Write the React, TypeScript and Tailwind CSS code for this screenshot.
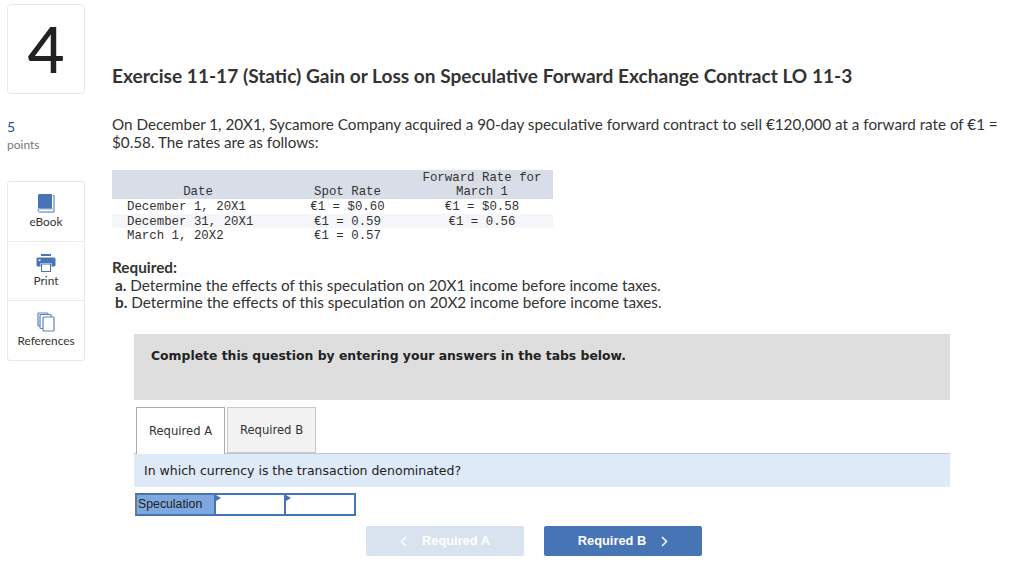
import React from "react";

const sans = "font-['Lato','Open_Sans',sans-serif]";

const rows = [
  { date: "December 1, 20X1", spot: "€1 = $0.60", forward: "€1 = $0.58", bg: "bg-white" },
  { date: "December 31, 20X1", spot: "€1 = 0.59", forward: "€1 = 0.56", bg: "bg-[#f5f6f9]" },
  { date: "March 1, 20X2", spot: "€1 = 0.57", forward: "", bg: "bg-white" },
];

const BookIcon = () => (
  <svg width="18" height="20" viewBox="0 0 18 20">
    <path d="M1 16V2.500C1 1.500 1.700 1 2.600 1H15v14H3c-1.200 0-2 .4-2 1z" fill="#4674b4" />
    <path d="M16 2.500h1V19H3c-1.300 0-2-.8-2-1.800S1.700 15.800 3 15.800h12.500" fill="none" stroke="#4674b4" strokeWidth="1" />
  </svg>
);

const PrintIcon = () => (
  <svg width="20" height="18" viewBox="0 0 20 18">
    <rect x="5" y="0" width="10" height="2" fill="#4674b4" />
    <path d="M2 3.500h16c.9 0 1.500.6 1.500 1.500v6c0 .8-.6 1.500-1.500 1.500h-2.500V9h-11v3.500H2c-.9 0-1.500-.7-1.500-1.500V5c0-.9.6-1.500 1.500-1.500z" fill="#4674b4" />
    <rect x="5.500" y="10" width="9" height="7.500" fill="#fff" stroke="#4674b4" />
    <rect x="2.500" y="5.500" width="2" height="1.500" fill="#fff" />
  </svg>
);

const RefIcon = () => (
  <svg width="18" height="20" viewBox="0 0 18 20" fill="#fff" stroke="#5a84bd" strokeWidth="1.200">
    <rect x="1" y="1" width="10" height="13" rx="1" />
    <rect x="3" y="2.500" width="11" height="14" rx="1" />
    <rect x="6" y="5" width="11" height="14" rx="1" />
  </svg>
);

const Tool = ({ icon, label, className, labelClass }: any) => (
  <div className={`flex flex-col items-center pt-[11px] ${className}`}>
    <div className="h-[20px] flex items-center">{icon}</div>
    <span className={`text-[11.800px] leading-[14px] text-[#333] ${labelClass}`}>{label}</span>
  </div>
);

export default function App() {
  return (
    <div className={`w-[1024px] h-[571px] overflow-hidden bg-white flex pl-[7px] pt-[4px] text-[#333] ${sans}`}>
      <aside className="w-[78px] shrink-0">
        <div className="h-[90px] border border-[#e8e8e8] rounded-[4px] flex items-center justify-center text-[64px] leading-none font-medium text-[#222]">
          4
        </div>
        <div className="mt-[24px] text-[14px] leading-[18px] text-[#2a4d8f]">5</div>
        <div className="text-[12px] leading-[17px] text-[#777]">points</div>
        <div className="mt-[28px] border border-[#e8e8e8] rounded-[3px]">
          <Tool icon={<BookIcon />} label="eBook" className="h-[60px] border-b border-[#ececec]" labelClass="mt-[2px]" />
          <Tool icon={<PrintIcon />} label="Print" className="h-[59px] border-b border-[#ececec]" labelClass="mt-[1px]" />
          <Tool icon={<RefIcon />} label="References" className="h-[59px]" labelClass="mt-[2px]" />
        </div>
      </aside>

      <main className="ml-[27px] flex-1 min-w-0">
        <h1 className="mt-[61px] text-[19.100px] leading-[22px] font-bold text-[#333]">
          Exercise 11-17 (Static) Gain or Loss on Speculative Forward Exchange Contract LO 11-3
        </h1>
        <p className="mt-[28px] text-[15.220px] leading-[18px] w-[895px]">
          On December 1, 20X1, Sycamore Company acquired a 90-day speculative forward contract to sell €120,000 at a forward rate of €1 = $0.58. The rates are as follows:
        </p>

        <table className="mt-[19px] w-[441px] table-fixed border-collapse font-['Liberation_Mono',monospace] text-[12.400px] text-[#333]">
          <thead className="bg-[#d9dde8] leading-[14px]">
            <tr>
              <th className="w-[172px] pt-[1px] font-normal text-center align-bottom">Date</th>
              <th className="w-[127px] pt-[1px] font-normal text-center align-bottom">Spot Rate</th>
              <th className="pt-[1px] font-normal text-center align-bottom">
                Forward Rate for
                <br />
                March 1
              </th>
            </tr>
          </thead>
          <tbody className="leading-[12.500px]">
            {rows.map((row) => (
              <tr key={row.date} className={row.bg}>
                <td className="pl-[15px] pt-[2px] whitespace-nowrap">{row.date}</td>
                <td className="pt-[2px] text-center">{row.spot}</td>
                <td className="pt-[2px] text-center">{row.forward}</td>
              </tr>
            ))}
          </tbody>
        </table>

        <div className="mt-[16.500px] text-[15.300px] leading-[17px]">
          <div className="font-bold h-[18px]">Required:</div>
          <div className="pl-[3px]"><b>a.</b> Determine the effects of this speculation on 20X1 income before income taxes.</div>
          <div className="pl-[3px]"><b>b.</b> Determine the effects of this speculation on 20X2 income before income taxes.</div>
        </div>

        <div className="ml-[22px] w-[816px]">
          <div className="mt-[23px] h-[66px] bg-[#dedede] pl-[17px] pt-[13px] font-['DejaVu_Sans',sans-serif] font-bold text-[12.400px] leading-[18px] text-[#222]">
            Complete this question by entering your answers in the tabs below.
          </div>

          <div className="mt-[7px] flex pl-[2px] gap-[2px] h-[46px] font-['DejaVu_Sans',sans-serif] text-[11.600px] text-[#333]">
            <div className="w-[89px] bg-white border border-b-0 border-[#aaa] flex items-center justify-center relative z-10 h-[47px] pt-[1px]">
              Required A
            </div>
            <div className="w-[89px] bg-[#f2f2f2] border border-[#c8c8c8] flex items-center justify-center pt-[2px]">
              Required B
            </div>
          </div>

          <div className="h-[34px] pt-[1px] bg-[#deeaf7] border-t border-[#b9c9dc] flex items-center pl-[10px] font-['DejaVu_Sans',sans-serif] text-[12.500px] text-[#222]">
            In which currency is the transaction denominated?
          </div>

          <div className="mt-[6px] ml-[1px] flex h-[23px] w-[221px] border-2 border-[#4674b4] border-l-[#6b7a8f] font-['Liberation_Sans',sans-serif] text-[12.300px] text-[#222]">
            <div className="w-[77px] bg-[#7ea8e0] pl-[1px] flex items-center">Speculation</div>
            <div className="w-[70px] relative border-l-2 border-[#4674b4]">
              <div className="absolute top-0 left-0 border-t-[3px] border-b-[3px] border-l-[5px] border-transparent border-l-[#4674b4]" />
            </div>
            <div className="flex-1 relative border-l-2 border-[#4674b4]">
              <div className="absolute top-0 left-0 border-t-[3px] border-b-[3px] border-l-[5px] border-transparent border-l-[#4674b4]" />
            </div>
          </div>

          <div className="mt-[10px] flex gap-[20px] pl-[232px] font-['Liberation_Sans',sans-serif] text-[12.800px] font-bold text-white">
            <div className="w-[158px] h-[30px] bg-[#d9e3ef] rounded-[2px] flex items-center justify-center gap-[15px]">
              <svg width="7" height="11" viewBox="0 0 7 11" fill="none" stroke="#fff" strokeWidth="1.500"><path d="M6 1 1.500 5.500 6 10" /></svg>
              Required A
            </div>
            <div className="w-[158px] h-[30px] bg-[#4674b4] rounded-[2px] flex items-center justify-center gap-[15px]">
              Required B
              <svg width="7" height="11" viewBox="0 0 7 11" fill="none" stroke="#fff" strokeWidth="1.500"><path d="M1 1l4.500 4.500L1 10" /></svg>
            </div>
          </div>
        </div>
      </main>
    </div>
  );
}
